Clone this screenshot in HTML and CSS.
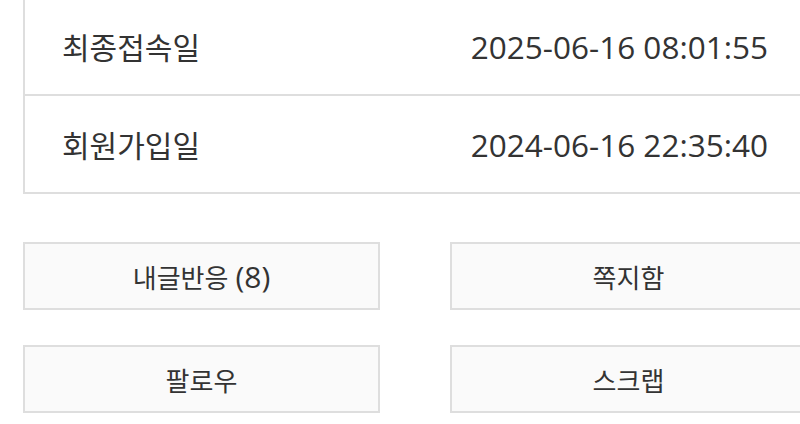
FILE: index.html
```html
<!DOCTYPE html>
<html lang="ko">
<head>
<meta charset="utf-8">
<title>회원정보</title>
<link rel="stylesheet" href="styles.css">
</head>
<body>
<div class="page">
  <div class="info">
    <div class="info-row">
      <span class="label">최종접속일</span>
      <span class="value">2025-06-16 08:01:55</span>
    </div>
    <div class="info-row">
      <span class="label">회원가입일</span>
      <span class="value">2024-06-16 22:35:40</span>
    </div>
  </div>
  <div class="actions">
    <button class="btn">내글반응<span class="count">(8)</span></button>
    <button class="btn">쪽지함</button>
    <button class="btn">팔로우</button>
    <button class="btn">스크랩</button>
  </div>
</div>
</body>
</html>
```

FILE: styles.css
```css
html, body {
  margin: 0;
  padding: 0;
  overflow: hidden;
  background: #ffffff;
}

body {
  font-family: "Open Sans", "Noto Sans CJK KR", sans-serif;
  color: #333333;
}

.page {
  width: 784px;
  margin-left: 23px;
  margin-top: -4px;
}

.info {
  border: 2px solid #dedede;
}

.info-row {
  height: 96px;
  display: flex;
  align-items: center;
  justify-content: space-between;
  padding: 0 37px;
}

.info-row + .info-row {
  border-top: 2px solid #dedede;
}

.label {
  font-family: "Noto Sans CJK KR", sans-serif;
  font-size: 30px;
}

.value {
  font-family: "Open Sans", "Noto Sans CJK KR", sans-serif;
  font-size: 31.5px;
}

.actions {
  margin-top: 48px;
  display: grid;
  grid-template-columns: 1fr 1fr;
  column-gap: 70px;
  row-gap: 35px;
}

.btn {
  height: 68px;
  margin: 0;
  padding: 0;
  border: 2px solid #dedede;
  background: #fafafa;
  color: #333333;
  font-family: "Noto Sans CJK KR", sans-serif;
  font-size: 26px;
  display: flex;
  align-items: center;
  justify-content: center;
}

.count {
  font-family: "Open Sans", sans-serif;
  font-size: 30px;
  margin-left: 7px;
}
```
